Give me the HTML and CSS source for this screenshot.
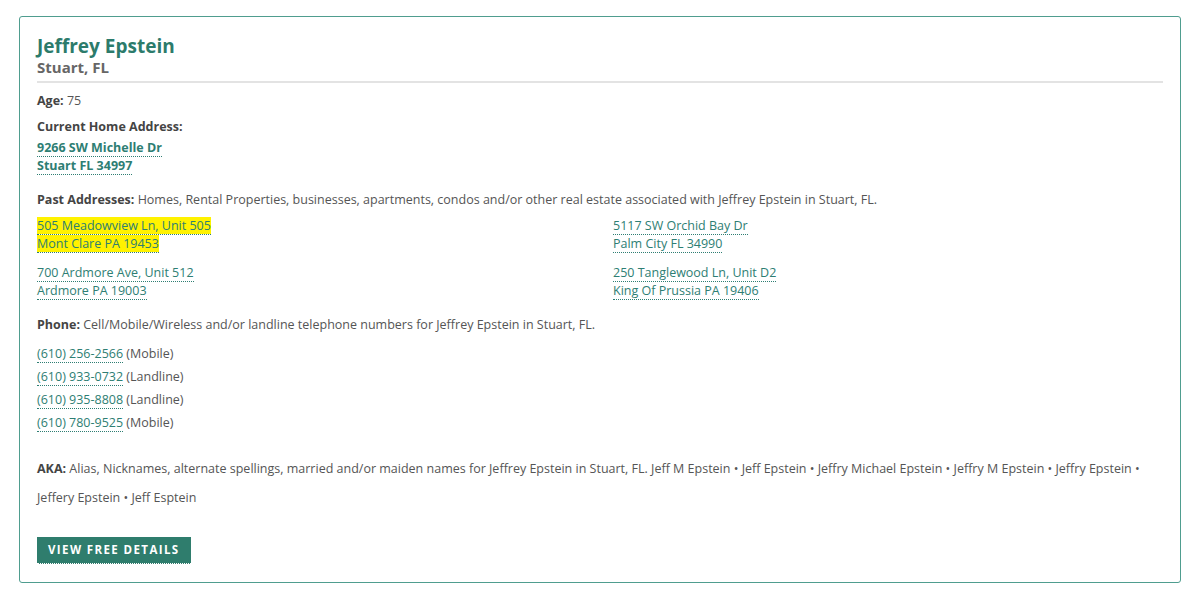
FILE: index.html
```html
<!DOCTYPE html>
<html lang="en">
<head>
  <meta charset="UTF-8">
  <title>Jeffrey Epstein - Stuart, FL</title>
  <link rel="stylesheet" href="styles.css">
</head>
<body>
  <div class="card">
    <div class="card-head">
      <h2 class="name">Jeffrey Epstein</h2>
      <div class="place">Stuart, FL</div>
    </div>

    <p class="row"><b>Age:</b> 75</p>

    <p class="row label-tight"><b>Current Home Address:</b></p>
    <p class="current">
      <a href="#">9266 SW Michelle Dr</a><br>
      <a href="#">Stuart FL 34997</a>
    </p>

    <p class="row"><b>Past Addresses:</b> Homes, Rental Properties, businesses, apartments, condos and/or other real estate associated with Jeffrey Epstein in Stuart, FL.</p>
    <div class="past">
      <div class="addr">
        <a href="#"><span class="hl">505 Meadowview Ln, Unit 505</span></a><br>
        <a href="#"><span class="hl">Mont Clare PA 19453</span></a>
      </div>
      <div class="addr">
        <a href="#">5117 SW Orchid Bay Dr</a><br>
        <a href="#">Palm City FL 34990</a>
      </div>
      <div class="addr">
        <a href="#">700 Ardmore Ave, Unit 512</a><br>
        <a href="#">Ardmore PA 19003</a>
      </div>
      <div class="addr">
        <a href="#">250 Tanglewood Ln, Unit D2</a><br>
        <a href="#">King Of Prussia PA 19406</a>
      </div>
    </div>

    <p class="row"><b>Phone:</b> Cell/Mobile/Wireless and/or landline telephone numbers for Jeffrey Epstein in Stuart, FL.</p>
    <ul class="phones">
      <li><a href="#">(610) 256-2566</a> (Mobile)</li>
      <li><a href="#">(610) 933-0732</a> (Landline)</li>
      <li><a href="#">(610) 935-8808</a> (Landline)</li>
      <li><a href="#">(610) 780-9525</a> (Mobile)</li>
    </ul>

    <p class="aka"><span class="aka-label">AKA:</span> Alias, Nicknames, alternate spellings, married and/or maiden names for Jeffrey Epstein in Stuart, FL. Jeff M Epstein &bull; Jeff Epstein &bull; Jeffry Michael Epstein &bull; Jeffry M Epstein &bull; Jeffry Epstein &bull; Jeffery Epstein &bull; Jeff Esptein</p>

    <a class="btn" href="#">View Free Details</a>
  </div>
</body>
</html>
```

FILE: styles.css
```css
body {
  margin: 0;
  padding: 16px 19px 9px 19px;
  background: #fff;
  font-family: "Open Sans", "Noto Sans", Arial, sans-serif;
  font-size: 12.5px;
  color: #555;
}
.card {
  border: 1px solid #4f9d8f;
  border-radius: 3px;
  padding: 18px 17px 18px 17px;
}
.card-head {
  border-bottom: 2px solid #e3e3e3;
  padding-bottom: 4px;
  margin-bottom: 9px;
}
.name {
  margin: 0;
  font-size: 19px;
  line-height: 22px;
  color: #2c7b6b;
  font-weight: bold;
}
.place {
  font-size: 15px;
  line-height: 20px;
  color: #666;
  font-weight: bold;
}
b,
.aka-label {
  color: #444;
  font-weight: bold;
}
p {
  margin: 0;
}
.row {
  line-height: 18px;
  margin-bottom: 8px;
}
.label-tight {
  margin-bottom: 3px;
}
a {
  color: #2e7e73;
  text-decoration: none;
  border-bottom: 1px dotted #2e7e73;
}
.current {
  line-height: 18px;
  margin-bottom: 16px;
}
.current a {
  font-weight: bold;
}
.past {
  display: grid;
  grid-template-columns: 1fr 1fr;
  column-gap: 26px;
  row-gap: 11px;
  margin-bottom: 16px;
}
.addr {
  line-height: 18px;
}
.hl {
  background: #fff200;
}
.phones {
  list-style: none;
  margin: 0 0 20px 0;
  padding: 0;
}
.phones li {
  line-height: 23px;
}
.aka {
  line-height: 29px;
  margin-bottom: 25px;
}
.btn {
  display: inline-block;
  background: #2f7d6d;
  color: #fff;
  font-weight: bold;
  font-size: 11.5px;
  letter-spacing: 1.4px;
  text-transform: uppercase;
  padding: 5px 11px 5px 11px;
  line-height: 16px;
  border-bottom: 1px dotted #fff;
}
```
